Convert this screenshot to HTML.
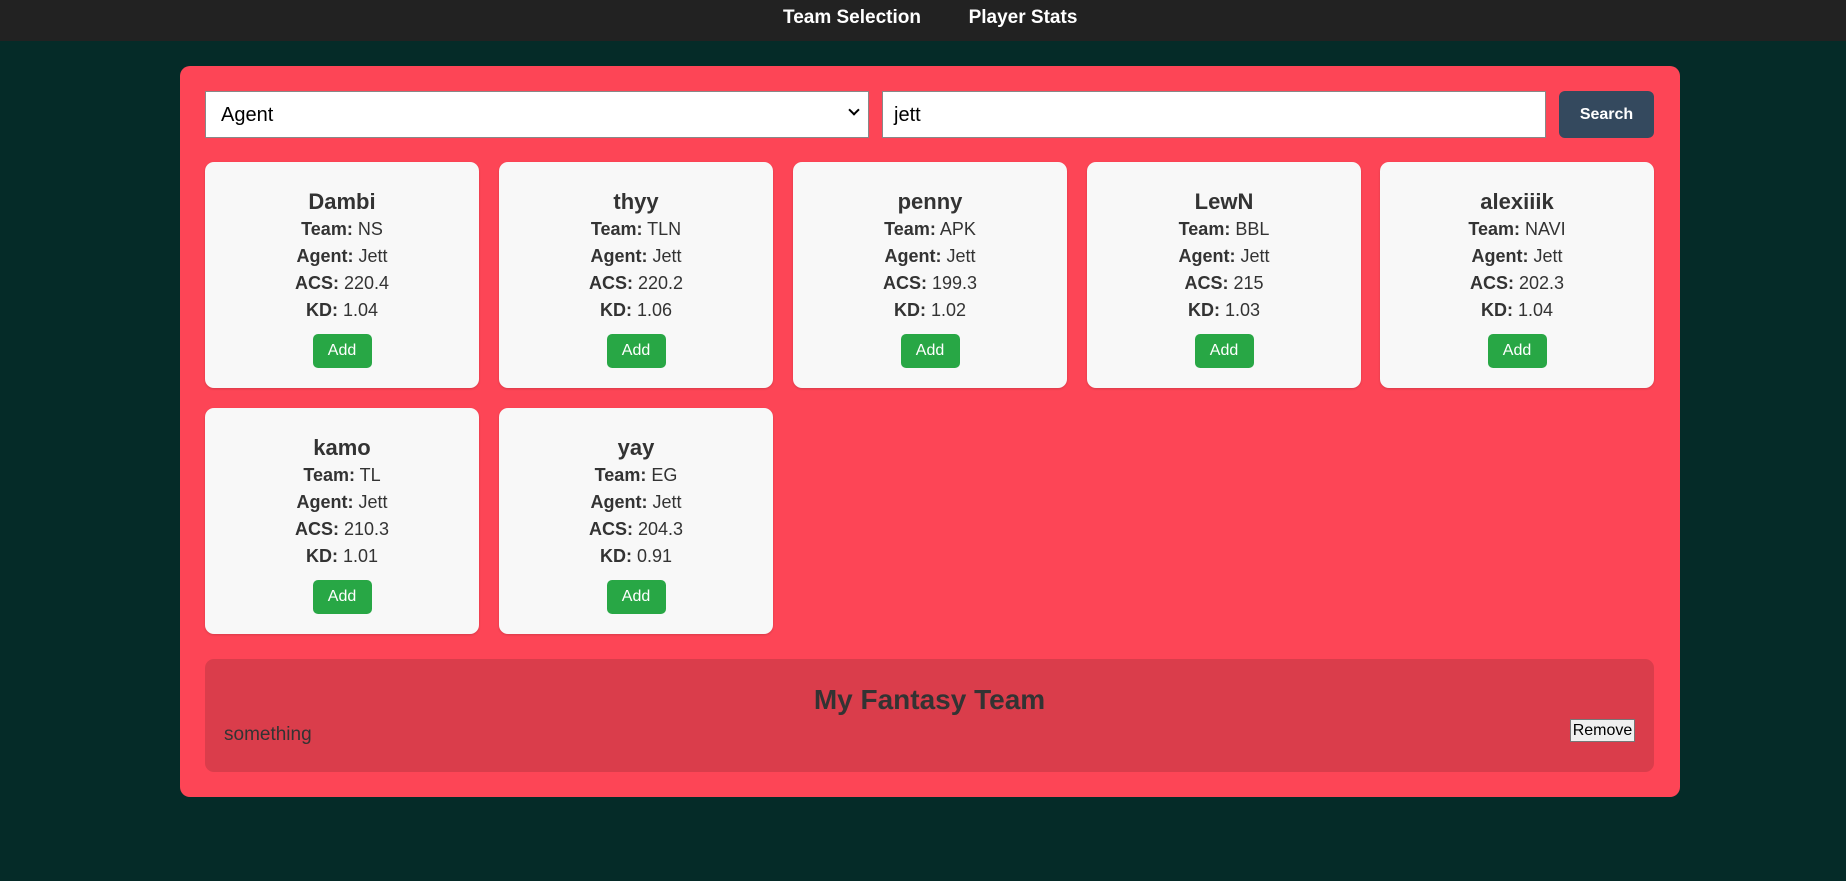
<!DOCTYPE html>
<html><head><style>
*{box-sizing:border-box;margin:0;padding:0}
body{width:1846px;height:881px;background:#052b28;font-family:"Liberation Sans",sans-serif;position:relative;overflow:hidden;color:#333}
.nav{position:absolute;left:0;top:0;width:1846px;height:41px;background:#222}
.nav span{position:absolute;top:7px;color:#fff;font-weight:bold;font-size:19px;transform:translateX(-50%);white-space:nowrap}
.box{position:absolute;left:180px;top:66px;width:1500px;height:731px;background:#fd4556;border-radius:10px}
.sel{position:absolute;left:205px;top:91px;width:664px;height:47px;background:#fff;border:1px solid #888;font-size:20px;padding:12px 15px;color:#000}
.sel i{position:absolute;right:10px;top:14px;width:8px;height:8px;border-right:2px solid #000;border-bottom:2px solid #000;transform:rotate(45deg)}
.inp{position:absolute;left:882px;top:91px;width:664px;height:47px;background:#fff;border:1px solid #888;font-size:20px;padding:12px 11px;color:#000}
.btn{position:absolute;left:1559px;top:91px;width:95px;height:47px;background:#34495e;border-radius:6px;color:#fff;font-weight:bold;font-size:16px;text-align:center;line-height:47px}
.card{position:absolute;width:274px;height:226px;background:#f8f8f8;border-radius:9px;text-align:center;box-shadow:0 1px 2px rgba(0,0,0,.15)}
.card h3{font-size:22px;margin-top:25px;line-height:29px}
.card p{font-size:18px;line-height:27px}
.card .a{display:inline-block;margin-top:10px;width:59px;height:34px;background:#28a745;color:#fff;border-radius:5px;line-height:34px;font-size:16px}
.panel{position:absolute;left:205px;top:659px;width:1449px;height:113px;background:#da3d4b;border-radius:9px}
.panel h2{position:absolute;width:100%;text-align:center;top:25px;font-size:28px}
.panel .s{position:absolute;left:19px;top:65px;font-size:19px}
.rm{position:absolute;left:1365px;top:60px;width:65px;height:23px;background:#f0f0f0;border:1px solid #777;font-size:16px;text-align:center;line-height:21px;color:#000}
</style></head><body>
<div class="nav"><span style="left:852px">Team Selection</span><span style="left:1023px">Player Stats</span></div>
<div class="box"></div>
<div class="sel">Agent<i></i></div>
<div class="inp">jett</div>
<div class="btn">Search</div>

<div class="card" style="left:205px;top:162px"><h3>Dambi</h3><p><b>Team:</b> NS</p><p><b>Agent:</b> Jett</p><p><b>ACS:</b> 220.4</p><p><b>KD:</b> 1.04</p><span class="a">Add</span></div>
<div class="card" style="left:499px;top:162px"><h3>thyy</h3><p><b>Team:</b> TLN</p><p><b>Agent:</b> Jett</p><p><b>ACS:</b> 220.2</p><p><b>KD:</b> 1.06</p><span class="a">Add</span></div>
<div class="card" style="left:793px;top:162px"><h3>penny</h3><p><b>Team:</b> APK</p><p><b>Agent:</b> Jett</p><p><b>ACS:</b> 199.3</p><p><b>KD:</b> 1.02</p><span class="a">Add</span></div>
<div class="card" style="left:1087px;top:162px"><h3>LewN</h3><p><b>Team:</b> BBL</p><p><b>Agent:</b> Jett</p><p><b>ACS:</b> 215</p><p><b>KD:</b> 1.03</p><span class="a">Add</span></div>
<div class="card" style="left:1380px;top:162px"><h3>alexiiik</h3><p><b>Team:</b> NAVI</p><p><b>Agent:</b> Jett</p><p><b>ACS:</b> 202.3</p><p><b>KD:</b> 1.04</p><span class="a">Add</span></div>
<div class="card" style="left:205px;top:408px"><h3>kamo</h3><p><b>Team:</b> TL</p><p><b>Agent:</b> Jett</p><p><b>ACS:</b> 210.3</p><p><b>KD:</b> 1.01</p><span class="a">Add</span></div>
<div class="card" style="left:499px;top:408px"><h3>yay</h3><p><b>Team:</b> EG</p><p><b>Agent:</b> Jett</p><p><b>ACS:</b> 204.3</p><p><b>KD:</b> 0.91</p><span class="a">Add</span></div>

<div class="panel"><h2>My Fantasy Team</h2><div class="s">something</div><div class="rm">Remove</div></div>
</body></html>
